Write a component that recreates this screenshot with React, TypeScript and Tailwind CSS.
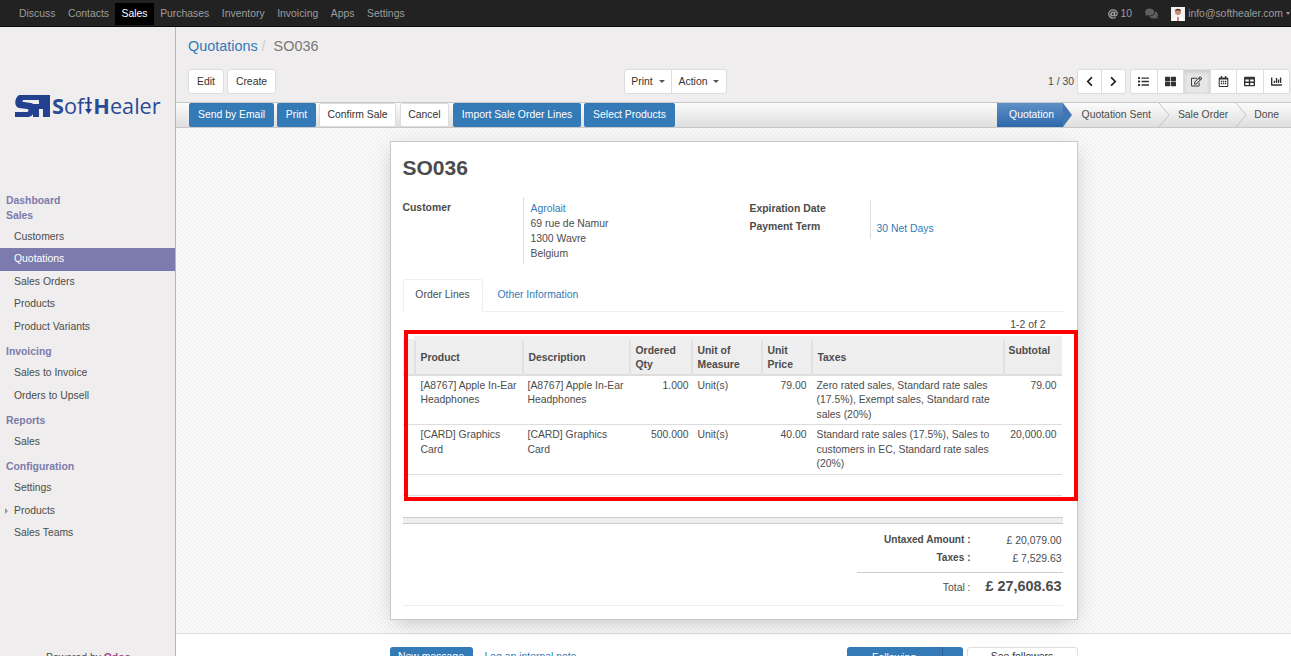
import { FaAt, FaChevronLeft, FaChevronRight, FaComments, FaChartBar, FaRegEdit, FaTable, FaRegCalendarAlt, FaThLarge, FaList } from "react-icons/fa";

const navItems = ["Discuss", "Contacts", "Sales", "Purchases", "Inventory", "Invoicing", "Apps", "Settings"];

const menu = [
  { title: "Dashboard", items: [] as string[] },
  { title: "Sales", items: ["Customers", "Quotations", "Sales Orders", "Products", "Product Variants"] },
  { title: "Invoicing", items: ["Sales to Invoice", "Orders to Upsell"] },
  { title: "Reports", items: ["Sales"] },
  { title: "Configuration", items: ["Settings", "Products", "Sales Teams"] },
];

const orderLines = [
  {
    product: "[A8767] Apple In-Ear Headphones",
    qty: "1.000",
    price: "79.00",
    taxes: "Zero rated sales, Standard rate sales (17.5%), Exempt sales, Standard rate sales (20%)",
    subtotal: "79.00",
  },
  {
    product: "[CARD] Graphics Card",
    qty: "500.000",
    price: "40.00",
    taxes: "Standard rate sales (17.5%), Sales to customers in EC, Standard rate sales (20%)",
    subtotal: "20,000.00",
  },
];

const actions = [
  { label: "Send by Email", className: "w-[85px] bg-[#337ab7] text-white" },
  { label: "Print", className: "w-[39px] bg-[#337ab7] text-white" },
  { label: "Confirm Sale", className: "w-[77px] border border-[#ddd] bg-white text-[#333]" },
  { label: "Cancel", className: "ml-[1px] w-[49px] border border-[#ddd] bg-white text-[#333]" },
  { label: "Import Sale Order Lines", className: "ml-[1px] w-[128px] bg-[#337ab7] text-white" },
  { label: "Select Products", className: "w-[91px] bg-[#337ab7] text-white" },
];

const steps = [
  { label: "Quotation Sent", className: "pl-[10px] pr-[14px]", chevron: true },
  { label: "Sale Order", className: "pl-[13px] pr-[14px]", chevron: true },
  { label: "Done", className: "pl-[12px] pr-[12px]", chevron: false },
];

function Caret() {
  return <span className="ml-[3px] inline-block h-0 w-0 border-x-[3px] border-t-[3px] border-x-transparent border-t-[#555] align-middle" />;
}

function Logo() {
  return (
    <div className="flex items-center text-[#2a4a94] [font-family:'Open_Sans',sans-serif]">
      <svg width="35" height="22" viewBox="0 0 35 22" className="mr-[2px] shrink-0">
        <path fill="#24418f" d="M4 0h31v22h-7v-8h-4v8h-6V11l-3-2h9V5H9C7 5 7 7 9 7l7 1c5 1 5 5 3 9-1 3-3 5-7 5H0v-5h12c2 0 2-3 0-3L4 13C-1 12-1 3 4 0z" />
      </svg>
      <span className="flex items-center text-[21.700px] leading-none">
        <b>S</b>
        <span>of</span>
        <svg width="7" height="17" viewBox="0 0 7 17" className="mx-[1px] shrink-0">
          <path fill="#24418f" d="M2.500 0h2v5H7v1.500H4.500V12H7l-3.500 5L0 12h2.500V6.500H0V5h2.500z" />
        </svg>
        <b>H</b>
        <span>ealer</span>
      </span>
    </div>
  );
}

function Sidebar() {
  return (
    <aside className="flex w-[176px] shrink-0 flex-col overflow-hidden border-r border-[#b5b5b5] bg-[#efeded] text-[10.400px]">
      <div className="flex h-[165.500px] shrink-0 items-start pt-[68px] pl-[15px]">
        <Logo />
      </div>
      {menu.map((group, i) => (
        <div key={group.title} className={i > 1 ? "mt-[5.500px]" : ""}>
          <div className="pl-[6px] leading-[15px] font-bold text-[#7c7bad]">{group.title}</div>
          {group.items.length > 0 && (
            <ul className="mt-[3.250px]">
              {group.items.map((item) => (
                <li
                  key={item}
                  className={`relative h-[22.500px] pl-[14px] leading-[22.500px] ${
                    item === "Quotations" ? "bg-[#7c7bad] text-white" : "text-[#4c4c4c]"
                  }`}
                >
                  {group.title === "Configuration" && item === "Products" && (
                    <span className="absolute top-[8px] left-[5px] h-0 w-0 border-y-[3px] border-l-[3px] border-y-transparent border-l-[#999]" />
                  )}
                  {item}
                </li>
              ))}
            </ul>
          )}
        </div>
      ))}
      <div className="mt-[105px] pl-[46px] leading-[15px] whitespace-nowrap text-[#4c4c4c]">
        Powered by <span className="font-bold text-[#a24689]">Odoo</span>
      </div>
    </aside>
  );
}

function TopBar() {
  return (
    <header className="flex h-[27px] shrink-0 items-center justify-between border-b border-[#0a0a0a] bg-[#222] pt-[2px] pr-[1px] pl-[12.700px] text-[10.400px]">
      <nav className="flex items-center">
        {navItems.map((item) => (
          <span
            key={item}
            className={`flex h-[22px] items-center px-[6.300px] ${item === "Sales" ? "bg-black text-white" : "text-[#9d9d9d]"}`}
          >
            {item}
          </span>
        ))}
      </nav>
      <div className="flex items-center text-[#9d9d9d]">
        <FaAt className="mr-[3px] text-[10px]" />
        <span>10</span>
        <FaComments className="mx-[13px] text-[13px] text-[#5f5f5f]" />
        <svg width="14" height="14" viewBox="0 0 14 14" className="mr-[3px]">
          <rect width="14" height="14" fill="#f2f2f2" />
          <path fill="#fff" d="M1 14c1-3 3-4 6-4s5 1 6 4z" />
          <circle cx="7" cy="5" r="3" fill="#c98a70" />
          <path fill="#5a2e20" d="M4 4c0-3 6-3 6 0-2-1-4-1-6 0z" />
          <path fill="#b0342c" d="M6.400 10h1.200v4H6.400z" />
        </svg>
        <span>info@softhealer.com</span>
        <span className="ml-[3px] h-0 w-0 border-x-[2.500px] border-t-[3px] border-x-transparent border-t-[#9d9d9d]" />
      </div>
    </header>
  );
}

function ControlPanel() {
  const whiteBtn = "h-[25px] rounded-[3px] border border-[#ddd] bg-white text-[10.400px] text-[#333]";
  return (
    <div className="shrink-0 bg-[#efeded]">
      <div className="h-[37px] pt-[9px] pl-[12px] text-[14.400px] leading-[20px]">
        <span className="text-[#337ab7]">Quotations</span>
        <span className="ml-[4px] text-[#ccc]">/</span>
        <span className="ml-[8px] text-[#777]">SO036</span>
      </div>
      <div className="flex h-[38px] items-start pt-[5px] pr-[1px] pl-[12px]">
        <div className="flex w-[436px] shrink-0 gap-[3px]">
          <button className={`${whiteBtn} w-[36px]`}>Edit</button>
          <button className={`${whiteBtn} w-[49px]`}>Create</button>
        </div>
        <div className="flex">
          <button className={`${whiteBtn} w-[48px] rounded-r-none`}>
            Print <Caret />
          </button>
          <button className={`${whiteBtn} -ml-px w-[56px] rounded-l-none`}>
            Action <Caret />
          </button>
        </div>
        <div className="ml-auto flex items-center">
          <span className="mr-[3px] text-[10.400px] text-[#4c4c4c]">1 / 30</span>
          <div className="mr-[4px] flex">
            <button className="flex h-[25px] w-[25px] items-center justify-center rounded-l-[3px] border border-[#ddd] bg-white text-[11px] text-[#222]">
              <FaChevronLeft />
            </button>
            <button className="-ml-px flex h-[25px] w-[25px] items-center justify-center rounded-r-[3px] border border-[#ddd] bg-white text-[11px] text-[#222]">
              <FaChevronRight />
            </button>
          </div>
          <div className="flex">
            {[FaList, FaThLarge, FaRegEdit, FaRegCalendarAlt, FaTable, FaChartBar].map((Icon, i) => (
              <button
                key={i}
                className={`-ml-px flex h-[25px] w-[27.500px] items-center justify-center border border-[#ddd] text-[11px] text-[#333] first:ml-0 first:rounded-l-[3px] last:rounded-r-[3px] ${
                  i === 2 ? "border-[#bbb] bg-[#e6e6e6] shadow-[inset_0_2px_4px_rgba(0,0,0,0.125)]" : "bg-white"
                }`}
              >
                <Icon />
              </button>
            ))}
          </div>
        </div>
      </div>
      <div className="flex h-[26px] items-center justify-between border-y border-[#c8c8c8] bg-gradient-to-b from-[#fcfcfc] to-[#dedede] pl-[13px]">
        <div className="flex h-[24px] items-center gap-[3px]">
          {actions.map((action) => (
            <button key={action.label} className={`h-[24px] rounded-[2px] text-[10.400px] ${action.className}`}>
              {action.label}
            </button>
          ))}
        </div>
        <div className="flex h-[24px] items-center text-[10.400px] text-[#4c4c4c]">
          <div className="relative mr-[9px] flex h-full w-[66px] items-center justify-center bg-gradient-to-b from-[#5f8fc5] to-[#2c69ad] pl-[4px] text-white">
            Quotation
            <span className="absolute top-0 left-full h-0 w-0 border-y-[12px] border-l-[9px] border-y-transparent border-l-[#3f77b5]" />
          </div>
          {steps.map((step) => (
            <div key={step.label} className={`relative flex h-full items-center ${step.className}`}>
              {step.label}
              {step.chevron && (
                <svg width="11" height="24" viewBox="0 0 11 24" className="absolute top-0 -right-[5px]">
                  <path d="M0 0l10 12L0 24" fill="none" stroke="#c4c4c4" />
                </svg>
              )}
            </div>
          ))}
        </div>
      </div>
    </div>
  );
}

function OrderTable() {
  const th = "border-l-2 border-t-[5px] border-l-[#e0e0e0] border-t-[#eee] px-[5px] pt-[2px] text-left align-middle font-bold leading-[14px] text-[#4c4c4c]";
  const td = "px-[5px] pt-[3px] pb-0";
  return (
    <table className="w-[659px] table-fixed border-collapse text-[10.400px] text-[#4c4c4c]">
      <colgroup>
        <col className="w-[12px]" />
        <col className="w-[108px]" />
        <col className="w-[107px]" />
        <col className="w-[62px]" />
        <col className="w-[70px]" />
        <col className="w-[50px]" />
        <col className="w-[192px]" />
        <col className="w-[58px]" />
      </colgroup>
      <thead>
        <tr className="h-[36px] border-b-2 border-[#ddd] bg-[#eee]">
          <th />
          <th className={th}>Product</th>
          <th className={th}>Description</th>
          <th className={th}>Ordered Qty</th>
          <th className={th}>Unit of Measure</th>
          <th className={th}>Unit Price</th>
          <th className={th}>Taxes</th>
          <th className={`${th} !pt-[3px] !pl-[4px] !align-top`}>Subtotal</th>
        </tr>
      </thead>
      <tbody className="leading-[14.700px]">
        {orderLines.map((line) => (
          <tr key={line.product} className="h-[50px] border-b border-[#ddd] align-top">
            <td />
            <td className="pt-[3px] pr-[2px] pl-[6px]">{line.product}</td>
            <td className="pt-[3px] pr-[2px] pl-[5px]">{line.product}</td>
            <td className="pt-[3px] pr-[3px] text-right">{line.qty}</td>
            <td className="pt-[3px] pr-[5px] pl-[6px]">Unit(s)</td>
            <td className={`${td} text-right`}>{line.price}</td>
            <td className={td}>{line.taxes}</td>
            <td className={`${td} text-right`}>{line.subtotal}</td>
          </tr>
        ))}
        <tr className="h-[21px] border-b border-[#ddd]">
          <td colSpan={8} />
        </tr>
      </tbody>
    </table>
  );
}

function Sheet() {
  return (
    <div className="relative mx-auto mt-[13px] h-[479px] w-[688px] border border-[#c8c8d3] bg-white pr-[14px] pl-[12px] text-[10.400px] leading-[15px] text-[#4c4c4c] shadow-[0_5px_20px_-5px_rgba(0,0,0,0.25)]">
      <h1 className="pt-[13px] text-[21px] leading-[26px] font-bold text-[#4c4c4c]">SO036</h1>
      <div className="mt-[16px] flex h-[67px]">
        <div className="w-[120px] pt-[3px] font-bold">Customer</div>
        <div className="w-[227px] border-l border-[#ddd] pt-[4px] pl-[7px]">
          <div className="text-[#337ab7]">Agrolait</div>
          <div>69 rue de Namur</div>
          <div>1300 Wavre</div>
          <div>Belgium</div>
        </div>
        <div className="w-[120px] pt-[3px] leading-[18px] font-bold">
          <div>Expiration Date</div>
          <div>Payment Term</div>
        </div>
        <div className="mt-[3px] h-[39px] border-l border-[#ddd] pt-[21px] pl-[6px] text-[#337ab7]">30 Net Days</div>
      </div>
      <div className="mt-[15px] flex h-[33px] border-b border-[#eee]">
        <div className="h-[33px] w-[80px] rounded-t-[3px] border border-[#eee] border-b-white pt-[7px] text-center">Order Lines</div>
        <div className="pt-[8px] pl-[15px] text-[#337ab7]">Other Information</div>
      </div>
      <div className="h-[24px] pt-[5px] pr-[17px] text-right">1-2 of 2</div>
      <OrderTable />
      <div className="absolute top-[188px] left-[13px] h-[171px] w-[674px] border-4 border-[#ff0000]" />
      <div className="mt-[21px] h-[7px] border-y border-[#ccc] bg-[#eee]" />
      <div className="ml-auto w-[206px] pt-[6px] pr-[1px]">
        <div className="flex h-[18px] items-center justify-end">
          <span className="text-[10.100px] font-bold">Untaxed Amount :</span>
          <span className="w-[91px] pt-[3px] text-right">£ 20,079.00</span>
        </div>
        <div className="flex h-[18px] items-center justify-end">
          <span className="text-[10.100px] font-bold">Taxes :</span>
          <span className="w-[91px] pt-[3px] text-right">£ 7,529.63</span>
        </div>
        <div className="mt-[6px] -mr-[1px] flex h-[28px] items-center justify-end border-t border-[#ccc] pr-[1px]">
          <span className="pt-[2px]">Total :</span>
          <span className="w-[91px] text-right text-[14.400px] font-bold">£ 27,608.63</span>
        </div>
      </div>
      <div className="mt-[5px] border-t border-[#eee]" />
    </div>
  );
}

function Chatter() {
  return (
    <div className="h-[60px] shrink-0 border-t border-[#ddd] bg-white pt-[13px] text-[10.400px]">
      <div className="mx-auto flex w-[688px] items-start">
        <button className="h-[20px] w-[83px] rounded-t-[3px] bg-[#337ab7] text-white">New message</button>
        <span className="mt-[2px] ml-[12px] text-[#337ab7]">Log an internal note</span>
        <div className="ml-auto flex h-[20px] w-[116px] rounded-t-[3px] bg-[#337ab7] text-white">
          <span className="flex-1 border-r border-[#2a6496] pt-[3px] text-center">Following</span>
          <span className="w-[20px]" />
        </div>
        <button className="ml-[4px] h-[20px] w-[111px] rounded-t-[3px] border border-[#ddd] bg-white text-[#333]">See followers</button>
      </div>
    </div>
  );
}

export default function App() {
  return (
    <div className="flex h-[656px] w-[1291px] flex-col overflow-hidden bg-white [font-family:'Liberation_Sans',Arial,sans-serif]">
      <TopBar />
      <div className="flex min-h-0 flex-1">
        <Sidebar />
        <main className="flex min-w-0 flex-1 flex-col overflow-hidden">
          <ControlPanel />
          <div className="h-[505px] shrink-0 bg-[#f6f6f6] bg-[repeating-conic-gradient(#f3f3f3_0_25%,#f9f9f9_0_50%)] bg-[length:4px_4px]">
            <Sheet />
          </div>
          <Chatter />
        </main>
      </div>
    </div>
  );
}
